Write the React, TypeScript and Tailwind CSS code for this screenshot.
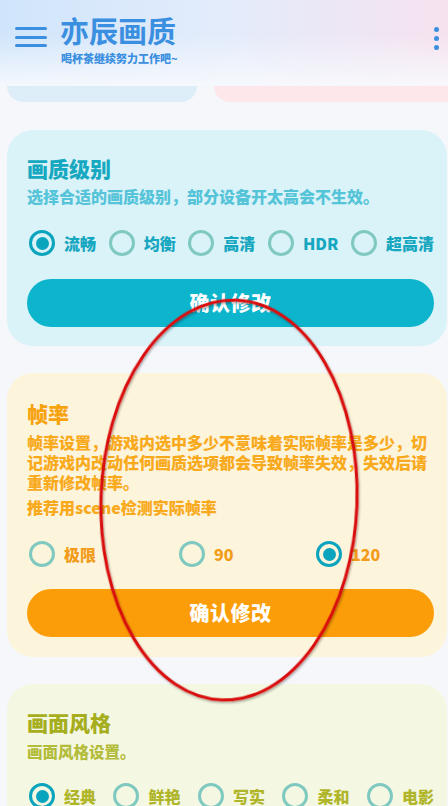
import React from "react";

type Opt = { label: string; checked?: boolean };

function Radio({ checked }: { checked?: boolean }) {
  return checked ? (
    <span className="flex h-[26px] w-[26px] shrink-0 items-center justify-center rounded-full border-[3px] border-[#0aa4be]">
      <span className="h-[13px] w-[13px] rounded-full bg-[#0aa4be]" />
    </span>
  ) : (
    <span className="h-[26px] w-[26px] shrink-0 rounded-full border-[3px] border-[#80c9c1]" />
  );
}

function Option({ label, checked, color }: Opt & { color: string }) {
  return (
    <div className="flex items-center gap-[9px]">
      <Radio checked={checked} />
      <span className={`text-[16px] font-black leading-[20px] ${color}`}>{label}</span>
    </div>
  );
}

function ConfirmButton({ bg }: { bg: string }) {
  return (
    <button className={`flex h-[48px] w-full items-center justify-center rounded-full ${bg} text-[20px] font-black tracking-[0.5px] text-white`}>
      确认修改
    </button>
  );
}

export default function App() {
  const quality: Opt[] = [
    { label: "流畅", checked: true },
    { label: "均衡" },
    { label: "高清" },
    { label: "HDR" },
    { label: "超高清" },
  ];
  const styles: Opt[] = [
    { label: "经典", checked: true },
    { label: "鲜艳" },
    { label: "写实" },
    { label: "柔和" },
    { label: "电影" },
  ];

  return (
    <div className="relative h-[806px] w-[448px] overflow-hidden bg-[#f5f7fb] font-['Noto_Sans_CJK_SC','Noto_Sans',sans-serif]">
      {/* header */}
      <header className="flex h-[86px] items-start bg-[linear-gradient(180deg,rgba(255,255,255,0)_40%,rgba(248,250,253,0.9)_100%),linear-gradient(90deg,#d0e5fb_0%,#e3ecfb_50%,#f6e2ef_100%)]">
        <div className="ml-[15px] mt-[27px] flex w-[32px] flex-col gap-[5.5px]">
          <span className="h-[3px] rounded-full bg-[#3b8fe0]" />
          <span className="h-[3px] rounded-full bg-[#3b8fe0]" />
          <span className="h-[3px] rounded-full bg-[#3b8fe0]" />
        </div>
        <div className="ml-[13px] mt-[11px] flex flex-col">
          <h1 className="text-[29px] font-bold leading-[38px] text-[#3b8fe0]">亦辰画质</h1>
          <p className="ml-[1px] mt-[2px] text-[11px] font-black leading-[14px] text-[#3b8fe0]">喝杯茶继续努力工作吧~</p>
        </div>
        <div className="ml-auto mr-[9px] mt-[27px] flex flex-col gap-[4px]">
          <span className="h-[5px] w-[5px] rounded-full bg-[#3b8fe0]" />
          <span className="h-[5px] w-[5px] rounded-full bg-[#3b8fe0]" />
          <span className="h-[5px] w-[5px] rounded-full bg-[#3b8fe0]" />
        </div>
      </header>

      {/* cards scrolled under the header */}
      <div className="flex h-[16px] gap-[17px] pl-[7px]">
        <div className="w-[190px] rounded-b-[22px] bg-[#ddeef9]" />
        <div className="flex-1 rounded-bl-[22px] bg-[#fde7eb]" />
      </div>

      <div className="flex flex-col gap-[27px] pl-[7px] pr-[1px] pt-[28px]">
        {/* 画质级别 */}
        <section className="rounded-[26px] bg-[#daf3f8] pb-[19px] pl-[20px] pr-[13px] pt-[24px]">
          <h2 className="text-[21px] font-black leading-[28px] text-[#16a8c1]">画质级别</h2>
          <p className="mt-[4px] text-[16px] font-black leading-[20px] text-[#55c3d8]">
            选择合适的画质级别，部分设备开太高会不生效。
          </p>
          <div className="mt-[24px] flex items-center justify-between pl-[2px]">
            {quality.map((o) => (
              <Option key={o.label} {...o} color="text-[#15a6c0]" />
            ))}
          </div>
          <div className="mt-[23px]">
            <ConfirmButton bg="bg-[#0cb4cc]" />
          </div>
        </section>

        {/* 帧率 */}
        <section className="rounded-[26px] bg-[#fdf4dc] pb-[20px] pl-[20px] pr-[13px] pt-[26px]">
          <h2 className="text-[21px] font-black leading-[28px] text-[#f7a20f]">帧率</h2>
          <p className="mt-[5px] text-[16px] font-black leading-[20px] text-[#f8aa1c]">
            帧率设置，游戏内选中多少不意味着实际帧率是多少，切记游戏内改动任何画质选项都会导致帧率失效，失效后请重新修改帧率。
          </p>
          <p className="mt-[5px] text-[16px] font-black leading-[20px] text-[#f8aa1c]">推荐用scene检测实际帧率</p>
          <div className="mt-[24px] grid grid-cols-[150px_137px_1fr] items-center pl-[2px]">
            <Option label="极限" color="text-[#f29c1a]" />
            <Option label="90" color="text-[#f29c1a]" />
            <Option label="120" checked color="text-[#f29c1a]" />
          </div>
          <div className="mt-[22px]">
            <ConfirmButton bg="bg-[#fb9d08]" />
          </div>
        </section>

        {/* 画面风格 */}
        <section className="rounded-[26px] bg-[#f4f8e2] pb-[20px] pl-[20px] pr-[13px] pt-[24px]">
          <h2 className="text-[21px] font-black leading-[28px] text-[#a6ae1e]">画面风格</h2>
          <p className="mt-[5px] text-[15.5px] font-black leading-[20px] text-[#b4bc3c]">画面风格设置。</p>
          <div className="mt-[22px] flex items-center justify-between pl-[2px]">
            {styles.map((o) => (
              <Option key={o.label} {...o} color="text-[#b0b52a]" />
            ))}
          </div>
        </section>
      </div>

      {/* red annotation ring drawn over the screenshot */}
      <svg className="pointer-events-none absolute inset-0" width="448" height="806" viewBox="0 0 448 806">
        <defs>
          <filter id="ringShadow" x="-10%" y="-10%" width="120%" height="120%">
            <feDropShadow dx="1" dy="1.5" stdDeviation="1.2" floodColor="#000" floodOpacity="0.35" />
          </filter>
        </defs>
        <ellipse
          cx="229"
          cy="500"
          rx="128"
          ry="200"
          transform="rotate(2 229 500)"
          fill="none"
          stroke="#d90f0f"
          strokeWidth="3"
          filter="url(#ringShadow)"
        />
      </svg>
    </div>
  );
}
